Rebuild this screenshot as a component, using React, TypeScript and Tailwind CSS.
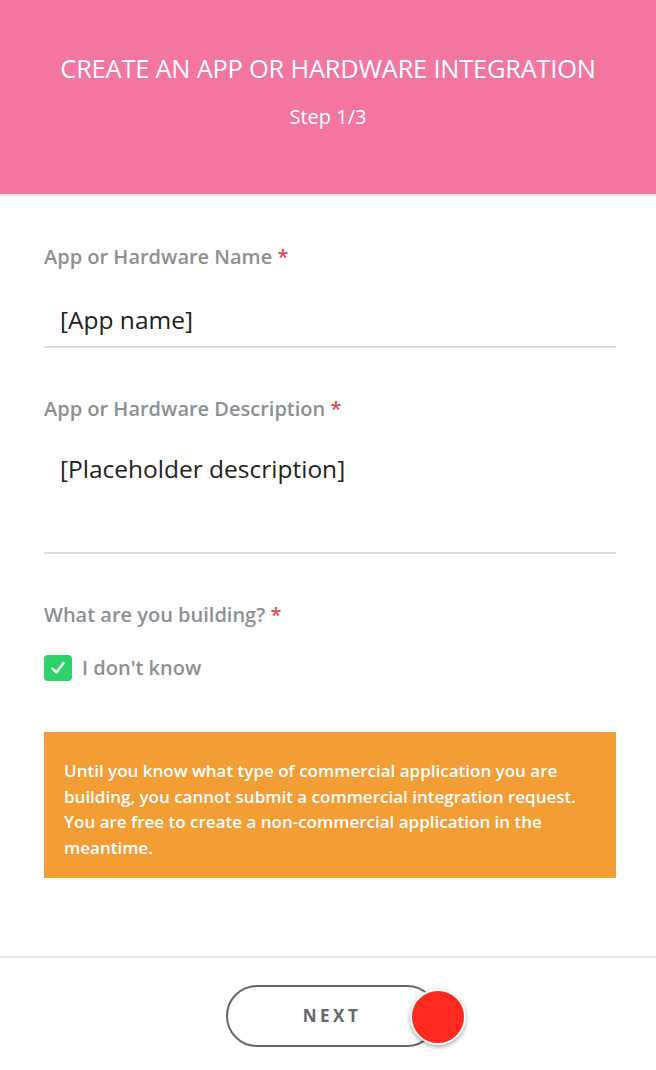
import React from "react";

export default function App() {
  const font = { fontFamily: "'Open Sans', 'Noto Sans', sans-serif" };
  return (
    <div className="w-[656px] h-[1070px] bg-white flex flex-col overflow-hidden" style={font}>
      <div className="h-[194px] bg-[#f276a0] flex flex-col items-center pt-[52px] text-white">
        <div className="text-[25.4px] leading-[32px] font-medium tracking-[-0.2px] whitespace-nowrap">CREATE AN APP OR HARDWARE INTEGRATION</div>
        <div className="text-[20px] leading-[24px] mt-[21px]">Step 1/3</div>
      </div>
      <div className="h-[2px] bg-[#e6e6e6]" />
      <div className="pl-[44px] pr-[40px] flex flex-col">
        <div className="mt-[49px] text-[20px] leading-[24px] text-[#8d9093] font-semibold">
          App or Hardware Name <span className="text-[#e0474c]">*</span>
        </div>
        <div className="mt-[36px] pl-[16px] text-[24.5px] leading-[30px] text-[#222]">[App name]</div>
        <div className="mt-[11px] h-[2px] bg-[#dadada]" />
        <div className="mt-[49px] text-[20px] leading-[24px] text-[#8d9093] font-semibold">
          App or Hardware Description <span className="text-[#e0474c]">*</span>
        </div>
        <div className="mt-[33px] pl-[16px] text-[24.5px] leading-[30px] text-[#222]">[Placeholder description]</div>
        <div className="mt-[68px] h-[2px] bg-[#dadada]" />
        <div className="mt-[49px] text-[20px] leading-[24px] text-[#8d9093] font-semibold">
          What are you building? <span className="text-[#e0474c]">*</span>
        </div>
        <div className="mt-[28px] flex items-center gap-[10px]">
          <div className="w-[28px] h-[26px] rounded-[4px] bg-[#2dd36a] flex items-center justify-center">
            <svg width="16" height="14" viewBox="0 0 16 14" fill="none">
              <path d="M2.5 7.5 L6.5 11.5 L13.5 2" stroke="white" strokeWidth="2.4" strokeLinecap="round" strokeLinejoin="round" />
            </svg>
          </div>
          <div className="text-[20px] leading-[24px] text-[#8d9093] font-semibold">I don't know</div>
        </div>
        <div className="mt-[51px] bg-[#f39d35] h-[146px] px-[20px] pt-[26px] text-white text-[17px] leading-[25.7px] font-semibold">
          Until you know what type of commercial application you are building, you cannot submit a commercial integration request. You are free to create a non-commercial application in the meantime.
        </div>
      </div>
      <div className="mt-[78px] h-[2px] bg-[#e6e6e6]" />
      <div className="flex justify-center mt-[27px] pl-[8px]">
        <div className="relative">
          <div className="w-[212px] h-[62px] rounded-full border-2 border-[#63666a] flex items-center justify-center text-[#63666a] text-[17px] font-bold tracking-[3.5px]">
            NEXT
          </div>
          <div className="absolute left-[184px] top-[4px] w-[56px] h-[56px] rounded-full bg-[#ff2a1f] border-2 border-white shadow-[0_2px_4px_rgba(0,0,0,0.35)]" />
        </div>
      </div>
    </div>
  );
}
